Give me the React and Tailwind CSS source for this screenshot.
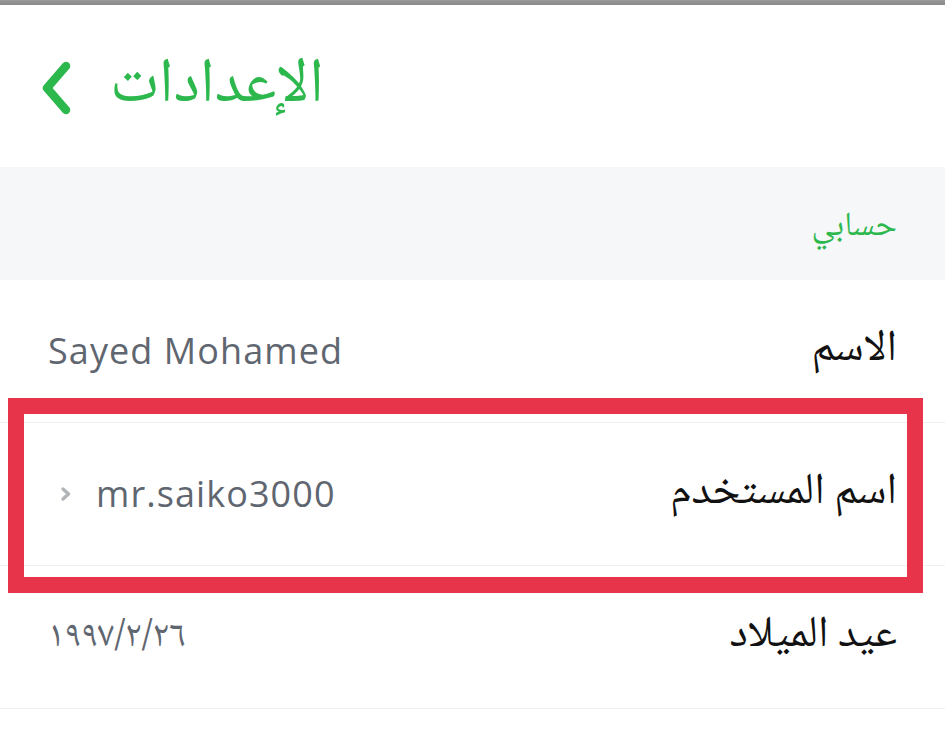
const arabic = { fontFamily: '"Noto Naskh Arabic", "Noto Sans Arabic", "DejaVu Sans", sans-serif' };
const latin = { fontFamily: '"Open Sans", "Noto Sans", sans-serif' };

function Row({ label, value, chevron, valueArabic }) {
  return (
    <div className="h-[143px] border-b border-[#eeeff1] flex items-center justify-between pl-12 pr-12">
      <div className="flex items-center gap-[24px] text-[#5f6670]">
        {chevron && (
          <svg width="12" height="16" viewBox="0 0 12 16" className="ml-[12px]">
            <path d="M3 3l5.5 5-5.5 5" fill="none" stroke="#b1b4b9" strokeWidth="3.4" strokeLinecap="round" strokeLinejoin="round" />
          </svg>
        )}
        {valueArabic ? (
          <span className="text-[37px] leading-none" style={arabic}>
            {value}
          </span>
        ) : (
          <span className="text-[36px] leading-none tracking-[0.03em]" style={latin}>
            {value}
          </span>
        )}
      </div>
      <span dir="rtl" className="text-[44px] leading-none text-[#111]" style={arabic}>
        {label}
      </span>
    </div>
  );
}

export default function App() {
  return (
    <div className="w-[945px] h-[749px] bg-white overflow-hidden relative">
      <div className="h-[5px] bg-gradient-to-b from-[#9a9a9a] to-[#8a8a8a]" />

      {/* Header */}
      <div className="h-[162px] flex items-center pl-[40px] gap-[36px]">
        <svg width="34" height="56" viewBox="0 0 34 56" className="mt-[3px]">
          <path d="M26 6L7 28l19 22" fill="none" stroke="#2db84d" strokeWidth="8.5" strokeLinecap="round" strokeLinejoin="round" />
        </svg>
        <h1 dir="rtl" className="text-[63px] leading-none text-[#2db84d] mt-[2px]" style={arabic}>
          الإعدادات
        </h1>
      </div>

      {/* Section */}
      <div className="h-[113px] bg-[#f6f7f9] flex items-center justify-end pr-12">
        <span dir="rtl" className="text-[34px] leading-none text-[#2db84d] mt-[8px]" style={arabic}>
          حسابي
        </span>
      </div>

      <Row label="الاسم" value="Sayed Mohamed" />
      <Row label="اسم المستخدم" value="mr.saiko3000" chevron />
      <Row label="عيد الميلاد" value="١٩٩٧/٢/٢٦" valueArabic />

      {/* highlight annotation */}
      <div className="absolute left-[8px] top-[398px] w-[915px] h-[195px] border-[16px] border-[#e8344a]" />
    </div>
  );
}
